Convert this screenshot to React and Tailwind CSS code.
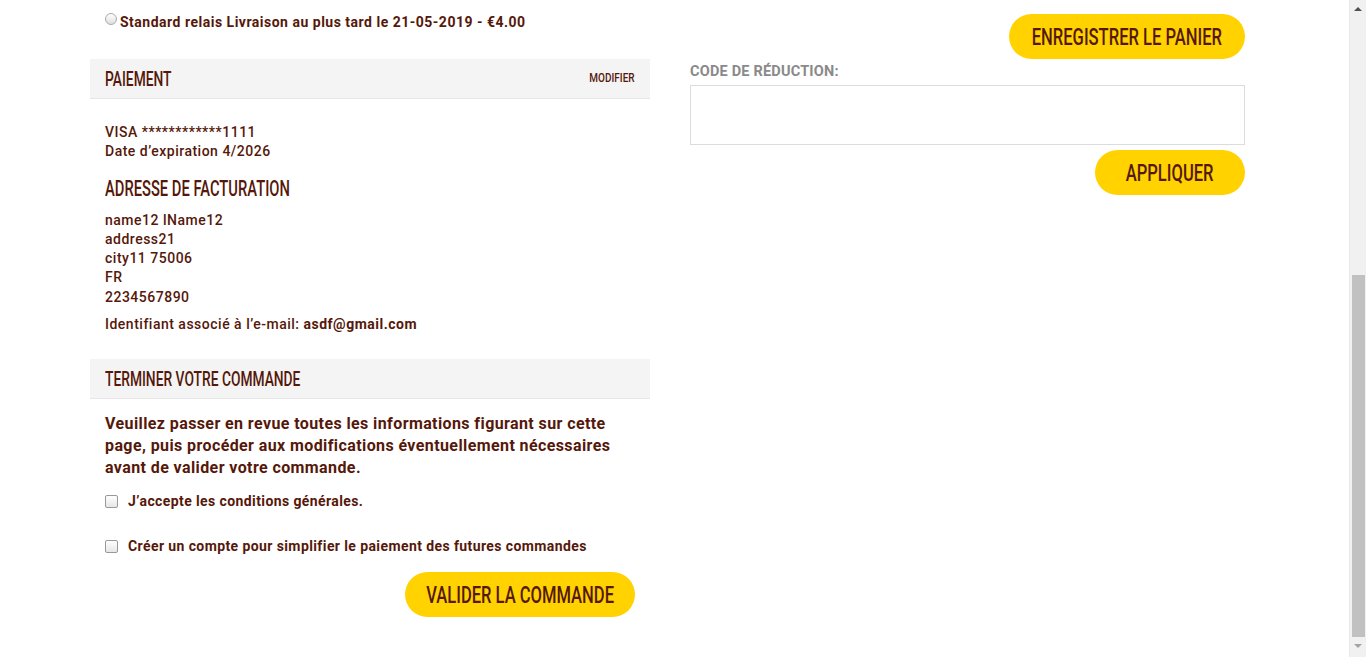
import React from 'react';

const body = "font-['Roboto','Liberation_Sans',sans-serif]";

// the screenshot uses a condensed DIN; no condensed face is installed, so squeeze Roboto
const Narrow = ({ children, className = '' }) => (
  <span className={`inline-block whitespace-nowrap ${className}`}>{children}</span>
);

const Pill = ({ children, className = '' }) => (
  <button className={`flex h-[45px] items-center justify-center overflow-hidden rounded-full bg-[#ffd200] text-[24px] font-medium uppercase text-[#55180a] ${className}`}>
    <Narrow className="origin-center scale-x-[0.69]">{children}</Narrow>
  </button>
);

const SectionHead = ({ title, action }) => (
  <div className="flex h-[40px] items-center justify-between overflow-hidden border-b border-[#e6e6e6] bg-[#f4f4f4] px-[15px]">
    <Narrow className="origin-left scale-x-[0.69] text-[20px] font-medium uppercase">{title}</Narrow>
    {action && <Narrow className="origin-right scale-x-[0.8] text-[12.5px] font-medium uppercase">{action}</Narrow>}
  </div>
);

const Check = ({ label }) => (
  <label className="flex items-center gap-[10px] text-[14px] font-bold tracking-[0.4px]">
    <span className="h-[13px] w-[13px] rounded-[2px] border border-[#999] bg-gradient-to-b from-white to-[#e6e6e6]" />
    {label}
  </label>
);

const App = () => {
  return (
    <div className={`${body} flex h-[657px] w-full overflow-hidden bg-white text-[#55180a]`}>
      <div className="flex flex-1 gap-[40px] pl-[90px] pr-[104px]">
        {/* left column */}
        <div className="w-[560px]">
          <div className="flex h-[59px] items-start gap-[3px] pl-[15px] pt-[12px] text-[14px] font-bold tracking-[0.5px]">
            <span className="mt-[1px] h-[12px] w-[12px] rounded-full border border-[#aaa] bg-gradient-to-b from-white to-[#dedede]" />
            <span>Standard relais Livraison au plus tard le 21-05-2019 - €4.00</span>
          </div>

          <SectionHead title="Paiement" action="Modifier" />
          <div className="px-[15px] pb-[25px] pt-[24px] text-[14px] font-medium leading-[19.3px] tracking-[0.5px]">
            <p>VISA ************1111</p>
            <p>Date d’expiration 4/2026</p>
            <h3 className="mb-[10px] mt-[15px] overflow-hidden text-[22px] font-medium uppercase leading-[24px] tracking-normal">
              <Narrow className="origin-left scale-x-[0.67]">Adresse de facturation</Narrow>
            </h3>
            <p>name12 lName12</p>
            <p>address21</p>
            <p>city11 75006</p>
            <p>FR</p>
            <p>2234567890</p>
            <p className="mt-[8px]">
              Identifiant associé à l’e-mail: <span className="font-bold">asdf@gmail.com</span>
            </p>
          </div>

          <SectionHead title="Terminer votre commande" />
          <div className="px-[15px] pt-[14px]">
            <p className="text-[16px] font-bold leading-[22px] tracking-[0.4px]">
              Veuillez passer en revue toutes les informations figurant sur cette page, puis procéder aux modifications éventuellement nécessaires avant de valider votre commande.
            </p>
            <div className="mt-[12px] flex flex-col gap-[24px]">
              <Check label="J’accepte les conditions générales." />
              <Check label="Créer un compte pour simplifier le paiement des futures commandes" />
            </div>
            <div className="mt-[15px] flex justify-end">
              <Pill className="w-[230px]">Valider la commande</Pill>
            </div>
          </div>
        </div>

        {/* right column */}
        <div className="flex flex-1 flex-col pt-[14px]">
          <div className="flex justify-end">
            <Pill className="w-[236px]">Enregistrer le panier</Pill>
          </div>
          <label className="mt-[4px] text-[14.5px] font-bold uppercase leading-[18px] tracking-[0.2px] text-[#8a8a8a]">Code de réduction:</label>
          <input className="mt-[4px] h-[60px] w-full border border-[#dcdcdc] outline-none" />
          <div className="mt-[5px] flex justify-end">
            <Pill className="w-[150px]">Appliquer</Pill>
          </div>
        </div>
      </div>

      {/* scrollbar */}
      <div className="flex w-[17px] flex-col items-center border-l border-[#e8e8e8] bg-[#f1f1f1]">
        <div className="flex h-[17px] items-center">
          <span className="h-0 w-0 border-x-[4px] border-b-[4px] border-x-transparent border-b-[#505050]" />
        </div>
        <div className="h-[258px]" />
        <div className="h-[362px] w-[13px] bg-[#c1c1c1]" />
        <div className="flex h-[17px] items-center">
          <span className="h-0 w-0 border-x-[4px] border-t-[4px] border-x-transparent border-t-[#a3a3a3]" />
        </div>
      </div>
    </div>
  );
};

export default App;
